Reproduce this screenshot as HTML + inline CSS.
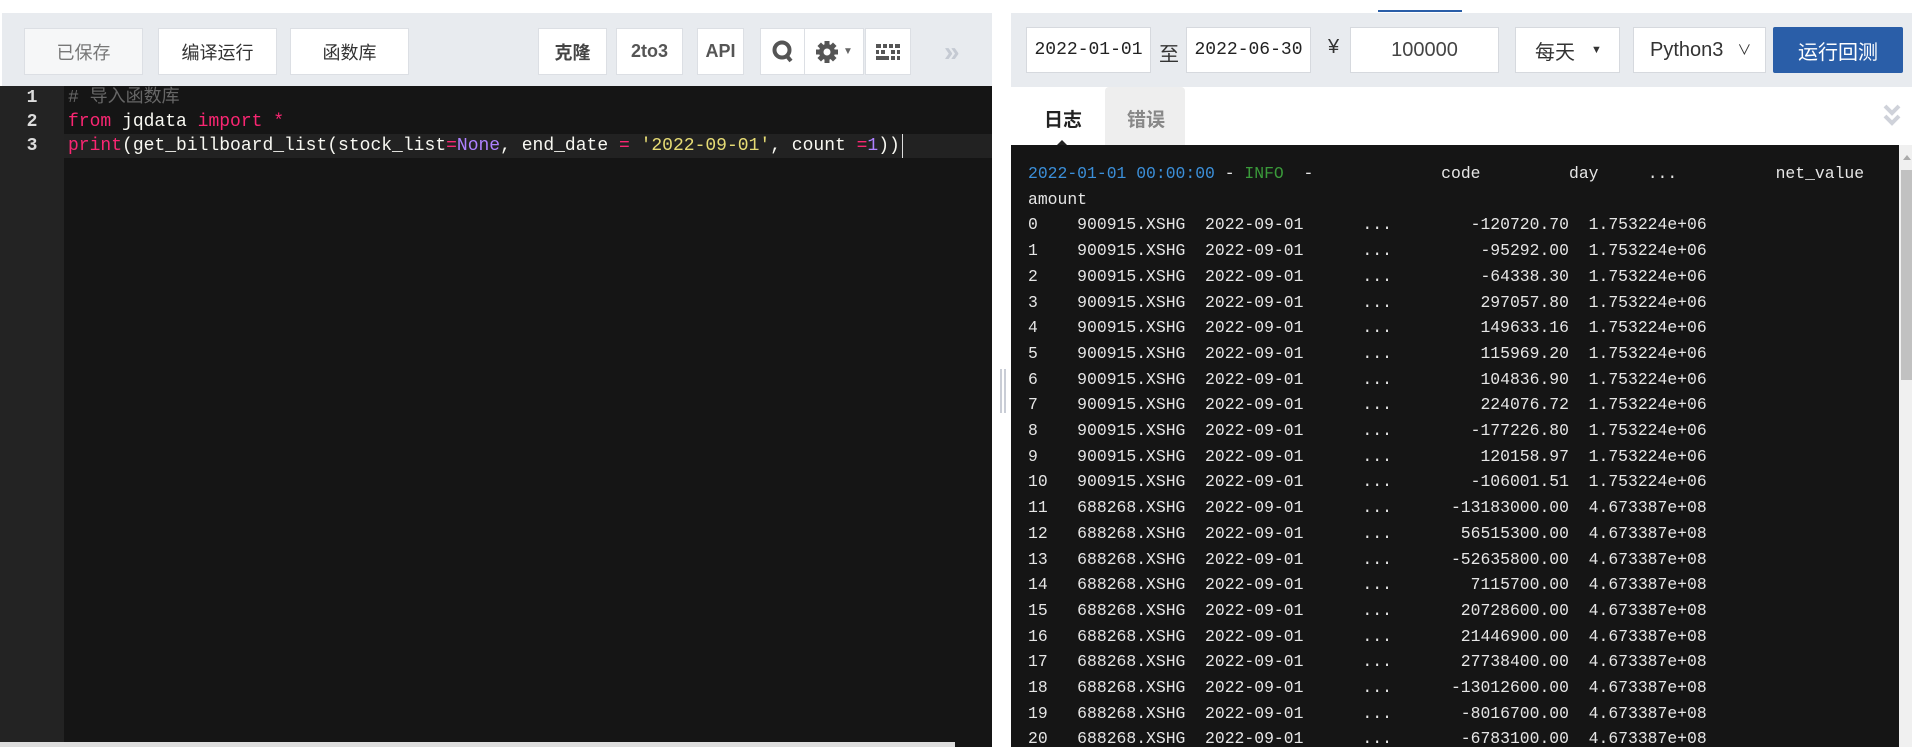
<!DOCTYPE html>
<html><head><meta charset="utf-8"><style>
*{margin:0;padding:0;box-sizing:border-box}
body{width:1912px;height:747px;overflow:hidden;background:#fff;position:relative;font-family:"Liberation Sans","Noto Sans CJK SC",sans-serif}
.a{position:absolute}
.btn{position:absolute;background:#fff;border:1px solid #dcdfe4;display:flex;align-items:center;justify-content:center;font-size:18px;color:#333}
.mono{font-family:"Liberation Mono","Noto Sans CJK SC",monospace}
.inp{position:absolute;background:#fff;border:1px solid #d6d9de;display:flex;align-items:center;font-size:19px;color:#222}
pre{font-family:"Liberation Mono",monospace;white-space:pre}
</style></head><body>
<div class="a" style="left:0;top:13px;width:992px;height:73px;background:#e8ebef;border-left:2px solid #fff"></div>
<div class="btn" style="left:24px;top:28px;width:119px;height:47px;background:#f6f7f8;color:#777">已保存</div>
<div class="btn" style="left:158px;top:28px;width:119px;height:47px">编译运行</div>
<div class="btn" style="left:290px;top:28px;width:119px;height:47px">函数库</div>
<div class="btn" style="left:538px;top:28px;width:69px;height:47px;font-weight:bold;color:#444">克隆</div>
<div class="btn" style="left:616px;top:28px;width:67px;height:47px;font-weight:bold;color:#555">2to3</div>
<div class="btn" style="left:697px;top:28px;width:47px;height:47px;font-weight:bold;color:#555">API</div>
<div class="btn" style="left:760px;top:28px;width:45px;height:47px"><svg width="24" height="26" viewBox="0 0 24 26"><circle cx="11" cy="11" r="7.5" fill="none" stroke="#555" stroke-width="4"/><path d="M15 16l5 6" stroke="#555" stroke-width="4"/></svg></div>
<div class="btn" style="left:804px;top:28px;width:60px;height:47px"><svg width="24" height="24" viewBox="0 0 24 24"><g fill="#555"><circle cx="12" cy="12" r="8"/><rect x="9.5" y="1" width="5" height="22"/><rect x="1" y="9.5" width="22" height="5"/><rect x="9.5" y="1" width="5" height="22" transform="rotate(45 12 12)"/><rect x="9.5" y="1" width="5" height="22" transform="rotate(-45 12 12)"/></g><circle cx="12" cy="12" r="3.5" fill="#fff"/></svg><span style="font-size:10px;color:#666;margin-left:4px">▼</span></div>
<div class="btn" style="left:865px;top:28px;width:46px;height:47px"><svg width="24" height="16" viewBox="0 0 24 16"><g fill="#555"><rect x="0" y="0" width="5" height="4"/><rect x="7" y="0" width="4" height="4"/><rect x="13" y="0" width="4" height="4"/><rect x="19" y="0" width="5" height="4"/><rect x="0" y="6" width="3" height="4"/><rect x="5" y="6" width="4" height="4"/><rect x="15" y="6" width="4" height="4"/><rect x="21" y="6" width="3" height="4"/><rect x="0" y="12" width="13" height="4"/><rect x="15" y="12" width="4" height="4"/><rect x="21" y="12" width="3" height="4"/></g></svg></div>
<div class="a" style="left:944px;top:36px;font-size:28px;color:#c5cad3;font-weight:bold">»</div>
<div class="a" style="left:0;top:86px;width:992px;height:661px;background:#151515"></div>
<div class="a" style="left:0;top:86px;width:64px;height:656px;background:#232323"></div>
<div class="a" style="left:64px;top:134px;width:928px;height:24px;background:#222"></div>
<div class="a" style="left:0;top:742px;width:955px;height:5px;background:#ddd"></div>
<pre class="a" style="left:0;top:86px;width:64px;text-align:center;color:#ddd;font-size:18px;line-height:24px;font-weight:bold">1
2
3</pre>
<pre class="a" style="left:68px;top:86px;font-size:18px;line-height:24px;color:#f8f8f2"><span style="color:#666"># 导入函数库</span>
<span style="color:#f92672">from</span> jqdata <span style="color:#f92672">import</span> <span style="color:#f92672">*</span>
<span style="color:#f92672">print</span>(get_billboard_list(stock_list<span style="color:#f92672">=</span><span style="color:#ae81ff">None</span>, end_date <span style="color:#f92672">=</span> <span style="color:#e6db74">'2022-09-01'</span>, count <span style="color:#f92672">=</span><span style="color:#ae81ff">1</span>))</pre>
<div class="a" style="left:902px;top:134px;width:1px;height:24px;background:#ddd"></div>
<div class="a" style="left:992px;top:0;width:19px;height:747px;background:#fff"></div>
<div class="a" style="left:1000px;top:369px;width:2px;height:44px;background:#c9cdd6"></div>
<div class="a" style="left:1004px;top:369px;width:2px;height:44px;background:#c9cdd6"></div>
<div class="a" style="left:1378px;top:10px;width:84px;height:2px;background:#2a5ea8"></div>
<div class="a" style="left:1011px;top:13px;width:901px;height:74px;background:#e8ebef"></div>
<div class="inp mono" style="left:1026px;top:27px;width:125px;height:46px;justify-content:center;font-size:18px">2022-01-01</div>
<div class="a" style="left:1159px;top:38px;font-size:20px;color:#333">至</div>
<div class="inp mono" style="left:1186px;top:27px;width:125px;height:46px;justify-content:center;font-size:18px">2022-06-30</div>
<div class="a" style="left:1328px;top:36px;font-size:20px;color:#333">¥</div>
<div class="inp" style="left:1350px;top:27px;width:149px;height:46px;justify-content:center;font-size:20px;color:#444">100000</div>
<div class="inp" style="left:1515px;top:27px;width:105px;height:46px;padding-left:19px;font-size:20px;color:#333">每天<span style="font-size:11px;margin-left:16px">▼</span></div>
<div class="inp" style="left:1633px;top:27px;width:133px;height:46px;padding-left:16px;font-size:20px;color:#333">Python3<span style="font-size:14px;margin-left:14px">∨</span></div>
<div class="a" style="left:1773px;top:27px;width:130px;height:46px;background:#2a5ea8;color:#fff;font-size:20px;display:flex;align-items:center;justify-content:center;border-radius:2px">运行回测</div>
<div class="a" style="left:1105px;top:87px;width:80px;height:58px;background:#eee;border-radius:4px 4px 0 0"></div>
<div class="a" style="left:1044px;top:105px;font-size:19px;font-weight:bold;color:#222">日志</div>
<div class="a" style="left:1127px;top:105px;font-size:19px;font-weight:bold;color:#888">错误</div>
<div class="a" style="left:1057px;top:140px;width:0;height:0;border-left:5px solid transparent;border-right:5px solid transparent;border-bottom:5px solid #222"></div>
<svg class="a" style="left:1882px;top:103px" width="20" height="24" viewBox="0 0 20 24"><path d="M3 3l7 7 7-7M3 13l7 7 7-7" fill="none" stroke="#cfd2da" stroke-width="4"/></svg>
<div class="a" style="left:1011px;top:145px;width:888px;height:602px;background:#151515"></div>
<div class="a" style="left:1899px;top:145px;width:13px;height:602px;background:#f0f0f0"></div>
<div class="a" style="left:1903px;top:155px;width:0;height:0;border-left:4px solid transparent;border-right:4px solid transparent;border-bottom:5px solid #aaa"></div>
<div class="a" style="left:1901px;top:170px;width:11px;height:210px;background:#c1c1c1"></div>
<pre class="a" style="left:1028px;top:161px;font-size:16.4px;line-height:25.7px;color:#e6e6e6"><span style="color:#3b8fd9">2022-01-01 00:00:00</span> - <span style="color:#3a9a3a">INFO</span>  -             code         day     ...          net_value
amount
0    900915.XSHG  2022-09-01      ...        -120720.70  1.753224e+06
1    900915.XSHG  2022-09-01      ...         -95292.00  1.753224e+06
2    900915.XSHG  2022-09-01      ...         -64338.30  1.753224e+06
3    900915.XSHG  2022-09-01      ...         297057.80  1.753224e+06
4    900915.XSHG  2022-09-01      ...         149633.16  1.753224e+06
5    900915.XSHG  2022-09-01      ...         115969.20  1.753224e+06
6    900915.XSHG  2022-09-01      ...         104836.90  1.753224e+06
7    900915.XSHG  2022-09-01      ...         224076.72  1.753224e+06
8    900915.XSHG  2022-09-01      ...        -177226.80  1.753224e+06
9    900915.XSHG  2022-09-01      ...         120158.97  1.753224e+06
10   900915.XSHG  2022-09-01      ...        -106001.51  1.753224e+06
11   688268.XSHG  2022-09-01      ...      -13183000.00  4.673387e+08
12   688268.XSHG  2022-09-01      ...       56515300.00  4.673387e+08
13   688268.XSHG  2022-09-01      ...      -52635800.00  4.673387e+08
14   688268.XSHG  2022-09-01      ...        7115700.00  4.673387e+08
15   688268.XSHG  2022-09-01      ...       20728600.00  4.673387e+08
16   688268.XSHG  2022-09-01      ...       21446900.00  4.673387e+08
17   688268.XSHG  2022-09-01      ...       27738400.00  4.673387e+08
18   688268.XSHG  2022-09-01      ...      -13012600.00  4.673387e+08
19   688268.XSHG  2022-09-01      ...       -8016700.00  4.673387e+08
20   688268.XSHG  2022-09-01      ...       -6783100.00  4.673387e+08</pre>
</body></html>
